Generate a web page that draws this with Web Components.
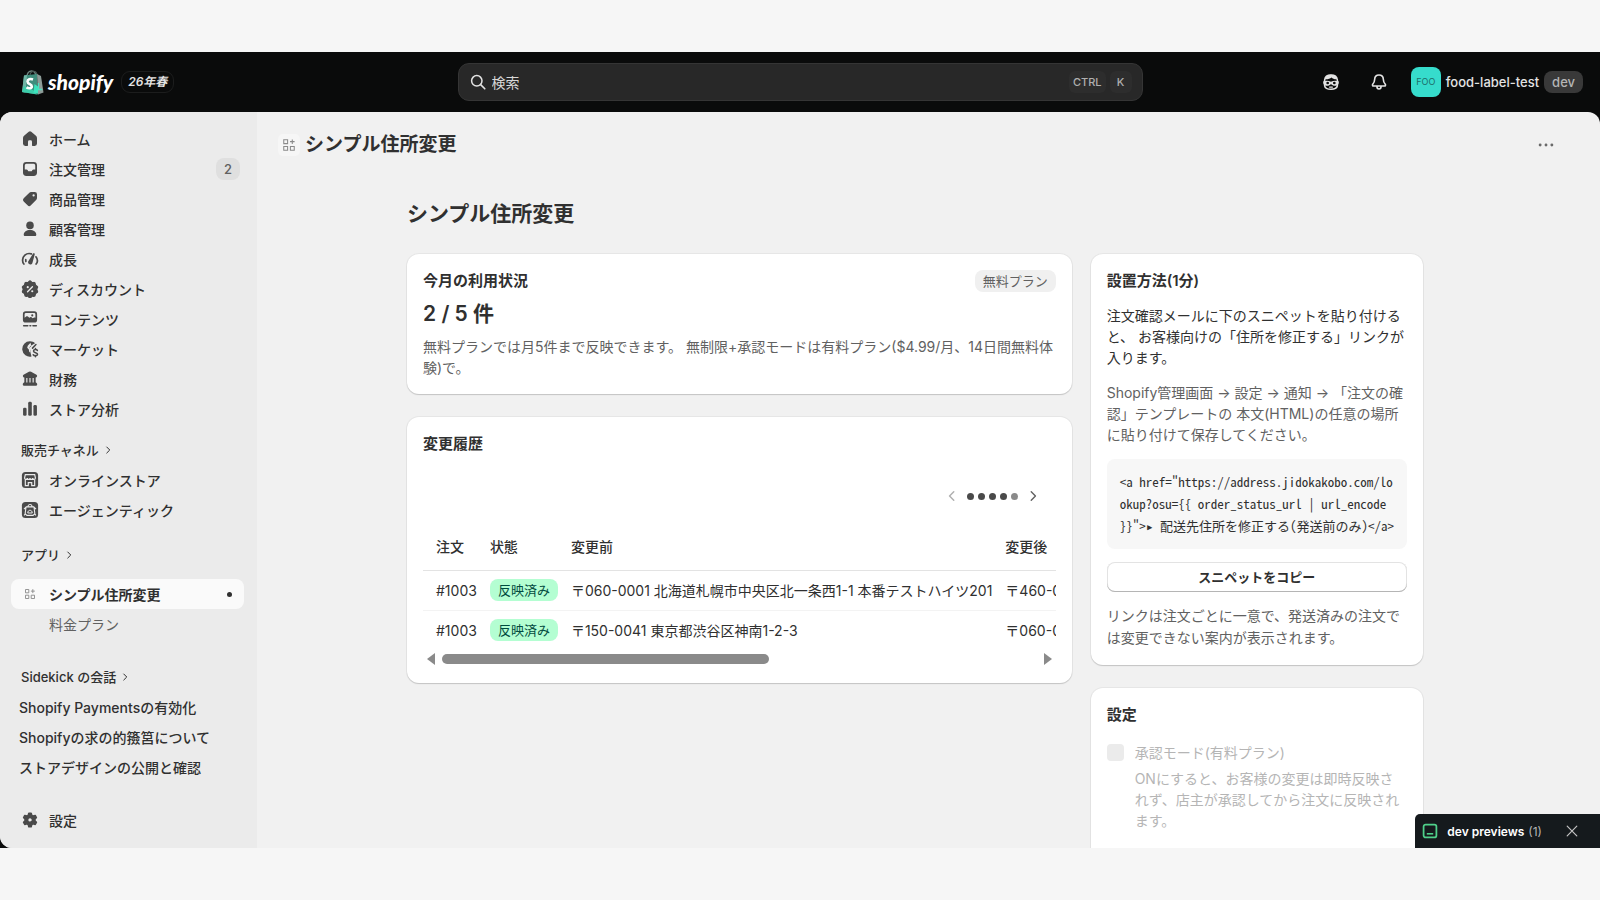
<!DOCTYPE html>
<html lang="ja">
<head>
<meta charset="utf-8">
<title>シンプル住所変更</title>
<style>
    html, body {
        height: 100%;
        margin: 0;
    }

    body {
        background: #f6f6f6;
        color: #303030;
        font-family: Inter, "Noto Sans CJK JP", sans-serif;
        font-size: 14px;
        line-height: 21px;
    }
</style>
</head>
<body>
<admin-shell>
    <top-bar slot="top"></top-bar>
    <side-nav slot="nav"></side-nav>
    <app-page slot="page" heading="シンプル住所変更">
        <usage-card slot="primary"></usage-card>
        <history-card slot="primary"></history-card>
        <install-card slot="secondary"></install-card>
        <settings-card slot="secondary"></settings-card>
    </app-page>
    <dev-preview slot="overlay"></dev-preview>
</admin-shell>

<script>
const ICONS = {
    home: '<path fill="currentColor" d="M8.600 2a2.100 2.100 0 0 1 2.800 0l5.200 4.500c.8.700 1.200 1.600 1.200 2.600V15a2.700 2.700 0 0 1-2.700 2.700H13a.8.8 0 0 1-.8-.8V13a1.500 1.500 0 0 0-1.500-1.500H9.300A1.500 1.500 0 0 0 7.800 13v3.900a.8.8 0 0 1-.8.8H4.900A2.700 2.700 0 0 1 2.200 15V9.100c0-1 .4-1.900 1.200-2.600z"/>',
    orders: '<path fill="currentColor" fill-rule="evenodd" d="M6 2.200h8A3.800 3.800 0 0 1 17.800 6v8a3.800 3.800 0 0 1-3.800 3.800H6A3.800 3.800 0 0 1 2.200 14V6A3.800 3.800 0 0 1 6 2.200zM6 4.200A1.800 1.800 0 0 0 4.200 6v4.500h1.900c.6 0 1.100.3 1.400.8l.4.800c.2.300.5.500.8.500h2.600c.3 0 .6-.2.800-.5l.4-.8c.3-.5.800-.8 1.400-.8h1.900V6A1.800 1.800 0 0 0 14 4.200z"/>',
    products: '<path fill="currentColor" fill-rule="evenodd" d="M11.300 2.200h3.900a2.600 2.600 0 0 1 2.600 2.600v3.900c0 .9-.3 1.700-1 2.300L11 17a2.600 2.600 0 0 1-3.700 0L3 12.800a2.600 2.600 0 0 1 0-3.700L9 3.200c.6-.6 1.400-1 2.300-1zM14 7.300a1.200 1.200 0 1 0 0-2.500 1.200 1.200 0 0 0 0 2.500z"/>',
    customers: '<circle cx="10" cy="6" r="4.200" fill="currentColor"/><path fill="currentColor" d="M3 16.400c0-3.100 3.200-5.200 7-5.200s7 2.100 7 5.200c0 .8-.6 1.400-1.400 1.400H4.400c-.8 0-1.400-.6-1.400-1.400z"/>',
    growth: '<path fill="none" stroke="currentColor" stroke-width="1.900" stroke-linecap="round" d="M3.200 15.600C1.200 13.400 1.100 8.700 4.300 5.800c2.200-2 5-2.200 7.200-1.500M16.600 7.600c2 2.600 1.900 5.900.2 8M5.300 10.800l.1 2"/><path fill="currentColor" d="M14.600 3.600c.5.2.8.7.7 1.200l-2.700 9.800a2.500 2.500 0 0 1-4.700-1.600c.1-.5.4-.8.6-1.100l4.900-8c.2-.3.7-.5 1.200-.3z"/>',
    discount: '<path fill="currentColor" d="M8.200 1.300a2.400 2.400 0 0 1 3.600 0l.8.9 1.300-.1a2.400 2.400 0 0 1 2.600 2.100l.2 1.200 1.100.6a2.400 2.400 0 0 1 .9 3.300l-.5 1.100.5 1.200a2.400 2.400 0 0 1-.9 3.200l-1.100.7-.2 1.200a2.400 2.400 0 0 1-2.600 2.100l-1.300-.1-.8.800a2.400 2.400 0 0 1-3.600 0l-.8-.8-1.300.1a2.400 2.400 0 0 1-2.600-2.100l-.2-1.200-1.100-.7a2.400 2.400 0 0 1-.9-3.200l.5-1.200-.5-1.100a2.400 2.400 0 0 1 .9-3.300l1.100-.6.2-1.200a2.400 2.400 0 0 1 2.600-2.100l1.300.1z"/><path stroke="#ebebeb" stroke-width="1.500" stroke-linecap="round" d="M7.300 13l5.400-5.600"/><circle cx="7.500" cy="8" r="1.200" fill="#ebebeb"/><circle cx="12.500" cy="12.500" r="1.200" fill="#ebebeb"/>',
    content: '<path fill="currentColor" fill-rule="evenodd" d="M5.300 1.500h9.400a3.200 3.200 0 0 1 3.200 3.200v6a3.200 3.200 0 0 1-3.200 3.200H5.300a3.200 3.200 0 0 1-3.200-3.200v-6a3.200 3.200 0 0 1 3.200-3.200zm.2 1.900A1.500 1.500 0 0 0 4 4.900v3.600l1.700-1.300c.6-.5 1.300-.5 1.900 0l1.700 1.500.7-.5c.6-.4 1.300-.4 1.900.1l1 1 1.300-.8c.6-.3 1.300-.3 1.800.1V4.900a1.500 1.500 0 0 0-1.500-1.500z"/><circle cx="12.500" cy="6" r="1.200" fill="currentColor"/><path stroke="currentColor" stroke-width="1.800" stroke-linecap="round" d="M3 17.500h4.500M10 17.500h.8M13.300 17.500H17"/>',
    markets: '<path fill="currentColor" d="M10 1.500c2.200 0 4.200.8 5.600 2.100l-3.800 2.100c-.7.4-.6 1-.9 1.600-.5.900-2 .8-2 1.900 0 1 1.200 1.100 1.500 2 .2.700-.2 1.200 0 2l1.300 5.100A8.500 8.500 0 1 1 10 1.500z"/><path fill="#ebebeb" d="M10.500 3l-3 3.300-.6 2.200 1.800 2 .3 2.300 1 1 .6-3-1.800-1.900 2.500-3z"/><path fill="none" stroke="currentColor" stroke-width="1.700" stroke-linecap="round" stroke-linejoin="round" d="M12.800 9l3.800-4M18.200 11.600c-.7-1.600-4.300-1.300-4.300.7 0 2.300 4.500 1.200 4.500 3.500 0 2-3.800 2.300-4.800.6M16.100 9.400v1.200M16.100 17.300v1.300"/>',
    finance: '<path fill="currentColor" d="M8.800 1.900a2.400 2.400 0 0 1 2.400 0l6 3.300c1.300.8.800 3-.9 3V13.700l1.100.8c.9.700 1 3.100-.9 3.100h-13c-1.900 0-1.800-2.400-.9-3.100l1.100-.8V8.200c-1.700 0-2.200-2.200-.9-3z"/><path stroke="#ebebeb" stroke-width="1.300" d="M6.500 8.800v5.200M10 8.800v5.200M13.500 8.800v5.200"/>',
    analytics: '<rect x="2.300" y="8.500" width="3.900" height="9" rx="1.500" fill="currentColor"/><rect x="8" y="2" width="4" height="15.500" rx="1.500" fill="currentColor"/><rect x="13.800" y="5.500" width="3.900" height="12" rx="1.500" fill="currentColor"/>',
    store: '<rect x="1" y="1" width="18" height="18" rx="4" fill="currentColor"/><path fill="none" stroke="#ebebeb" stroke-width="1.300" d="M4.800 4h10.400l.8 3.700c0 2.200-2.900 2.200-3 0-.1 2.200-2.900 2.200-3 0-.1 2.200-2.900 2.200-3 0-.1 2.200-3 2.200-3 0zM4.800 10v6.200h3.300v-3.200h3.800v3.200h3.300V10"/>',
    agentic: '<rect x="1" y="1" width="18" height="18" rx="4" fill="currentColor"/><path fill="none" stroke="#ebebeb" stroke-width="1.200" stroke-linejoin="round" d="M5.600 6.500h8.800l1 7.500-1.900 2H6.500l-1.900-2zM7.800 6.200c0-3 4.400-3 4.400 0M3.300 9l2.200-2.200M16.700 9l-2.200-2.200M5.200 13.800L3.500 16M14.800 13.800l1.700 2.200"/><path fill="none" stroke="#ebebeb" stroke-width="1.100" d="M7.500 13.300c0-4 5-4 5 0z"/>',
    settings: '<path fill="currentColor" fill-rule="evenodd" d="M8.700 1.900h2.600l.7 2.300 1.400.8 2.400-.6 1.300 2.300-1.600 1.800v1.700l1.600 1.800-1.300 2.300-2.400-.6-1.400.8-.7 2.400H8.700L8 14.500l-1.400-.8-2.400.6-1.300-2.300 1.600-1.800V8.500L2.900 6.700l1.300-2.300 2.400.6L8 4.200zM10 12a2.700 2.700 0 1 0 0-5.400 2.700 2.700 0 0 0 0 5.400z" stroke="currentColor" stroke-width="1.700" stroke-linejoin="round" transform="translate(0 .6)"/>',
    app: '<g fill="none" stroke="#8a8a8a" stroke-width="1.500"><path d="M2.500 2.500h5.500v5.500h-5.500zM2.500 12h5.500v5.500h-5.500zM12 12h5.500v5.500h-5.500z"/><path d="M14.700 2v6.500M11.500 5.200H18"/></g>',
    chevron: '<path fill="none" stroke="currentColor" stroke-width="2" stroke-linecap="round" stroke-linejoin="round" d="M7.500 4l6 6-6 6"/>',
    chevronLeft: '<path fill="none" stroke="currentColor" stroke-width="2" stroke-linecap="round" stroke-linejoin="round" d="M12.500 4l-6 6 6 6"/>',
    search: '<circle cx="8.500" cy="8.500" r="6.500" fill="none" stroke="currentColor" stroke-width="1.900"/><path stroke="currentColor" stroke-width="2" stroke-linecap="round" d="M13.300 13.300l5.200 5.200"/>',
    sidekick: '<path fill="none" stroke="currentColor" stroke-width="1.700" d="M3 7.500c.4-3.300 3.500-5.200 7-5.200s6.600 1.900 7 5.200c.5 3 .5 5 0 7-.5 2.200-3.500 3.500-7 3.500s-6.500-1.300-7-3.500c-.5-2-.5-4 0-7z"/><path fill="currentColor" d="M3 7C4 3 7 2 10 2c3.500 0 6 1.500 7 5-3 .300-5-.5-6.500-2C9 6.500 6 7.300 3 7z"/><path fill="currentColor" fill-rule="evenodd" d="M1.500 9.300C4.500 8 7.500 8.500 10 9.600c2.500-1.100 5.500-1.600 8.500-.3.600 2.700-1 5-4 5-2 0-3.500-1-4.500-2-1 1-2.500 2-4.500 2-3 0-4.600-2.300-4-5zM6.300 12.600a1.500 1.500 0 1 0 0-3 1.500 1.500 0 0 0 0 3zM13.700 12.600a1.500 1.500 0 1 0 0-3 1.500 1.500 0 0 0 0 3z"/><path stroke="currentColor" stroke-width="1.300" stroke-linecap="round" d="M8.500 15.700h3"/>',
    bell: '<path fill="none" stroke="currentColor" stroke-width="1.800" stroke-linejoin="round" d="M10 2.200c-2.900 0-4.700 2-4.800 4.800-.1 3-.700 3.900-2 5.200-.9 1-.4 2.300.8 2.300h12c1.200 0 1.700-1.300.8-2.300-1.300-1.300-1.900-2.200-2-5.200-.1-2.800-1.900-4.800-4.800-4.800zM7.700 15c0 3.700 4.600 3.700 4.600 0"/>',
    more: '<g fill="currentColor"><circle cx="3.500" cy="10" r="1.600"/><circle cx="10" cy="10" r="1.600"/><circle cx="16.500" cy="10" r="1.600"/></g>',
    preview: '<rect x="2" y="2" width="16" height="16" rx="2.500" fill="none" stroke="#4fd08a" stroke-width="2.200"/><path stroke="#4fd08a" stroke-width="2" d="M6 13.500h8"/>',
    close: '<path stroke="currentColor" stroke-width="2" stroke-linecap="round" d="M2 2l16 16M18 2L2 18"/>'
};

const BASE = `
    *, *::before { box-sizing: border-box; }
    button { font: inherit; color: inherit; border: 0; padding: 0; background: none; cursor: pointer; }
    a { color: inherit; text-decoration: none; }
    h1, h2, p { margin: 0; }
`;

class BaseElement extends HTMLElement {
    connectedCallback() {
        if (this.shadowRoot) return;
        const template = document.createElement("template");
        template.innerHTML = `<style>${BASE}</style>${this.render()}`;
        this.attachShadow({ mode: "open" }).append(template.content.cloneNode(true));
    }
}

class UiIcon extends BaseElement {
    render() {
        return `
            <style>
                :host { display: block; flex: none; width: 18px; height: 18px; }
                svg { display: block; width: 100%; height: 100%; }
            </style>
            <svg viewBox="0 0 20 20" fill="none" aria-hidden="true">${ICONS[this.getAttribute("name")]}</svg>
        `;
    }
}

class UiBadge extends BaseElement {
    render() {
        return `
            <style>
                :host {
                    display: inline-block;
                    flex: none;
                    padding: 0 8px;
                    border-radius: 8px;
                    background: #f0f0f0;
                    color: #616161;
                    font-size: 13px;
                    line-height: 22px;
                    white-space: nowrap;
                }
                :host([tone="success"]) { background: #b4fed2; color: #014b40; }
                :host([tone="count"]) { background: #dfdfdf; }
                :host([tone="dark"]) { background: #393939; color: #b5b5b5; }
            </style>
            <slot></slot>
        `;
    }
}

class UiCard extends BaseElement {
    render() {
        return `
            <style>
                :host {
                    display: flex;
                    flex-direction: column;
                    padding: 16px;
                    border-radius: 12px;
                    background: #fff;
                    box-shadow: 0 1px 1px #c4c4c4, 0 0 0 1px #e6e6e6;
                }
                header { display: flex; justify-content: space-between; align-items: center; }
                h2 { font-size: 15px; line-height: 22px; font-weight: 600; }
            </style>
            <header><h2>${this.getAttribute("heading")}</h2><slot name="aside"></slot></header>
            <slot></slot>
        `;
    }
}

class AdminShell extends BaseElement {
    render() {
        return `
            <style>
                :host { display: flex; height: 100vh; padding: 52px 0; box-sizing: border-box; }
                .frame {
                    position: relative;
                    display: flex;
                    flex-direction: column;
                    flex: 1;
                    min-width: 0;
                    overflow: hidden;
                    background: #0a0b0b;
                }
                .panel {
                    display: flex;
                    flex: 1;
                    min-height: 0;
                    overflow: hidden;
                    border-radius: 12px;
                    background: #f1f1f1;
                }
                ::slotted([slot="page"]) { flex: 1; min-width: 0; }
            </style>
            <div class="frame">
                <slot name="top"></slot>
                <div class="panel">
                    <slot name="nav"></slot>
                    <slot name="page"></slot>
                </div>
                <slot name="overlay"></slot>
            </div>
        `;
    }
}

class TopBar extends BaseElement {
    render() {
        return `
            <style>
                :host {
                    display: grid;
                    grid-template-columns: 1fr minmax(0, 685px) 1fr;
                    align-items: center;
                    flex: none;
                    height: 60px;
                    padding: 0 17px;
                    color: #e3e3e3;
                }
                .brand, .tools, .account { display: flex; align-items: center; }
                .brand { padding-left: 4px; }
                .logo { display: flex; align-items: center; gap: 4px; color: #fff; font: italic 900 21px/26px Lato, sans-serif; }
                .edition {
                    margin-left: 8px;
                    padding: 0 6px;
                    border: 1px solid #1c1d1d;
                    border-radius: 9px;
                    font-size: 12px;
                    line-height: 20px;
                    font-weight: 600;
                    font-style: italic;
                }
                .search {
                    display: flex;
                    align-items: center;
                    gap: 4px;
                    height: 38px;
                    padding: 0 10px 0 11px;
                    border: 1px solid #353535;
                    border-radius: 11px;
                    background: #282828;
                }
                .search ui-icon { width: 16px; height: 16px; margin-right: 2px; }
                input {
                    flex: 1;
                    min-width: 0;
                    padding: 0;
                    border: 0;
                    outline: 0;
                    background: none;
                    color: inherit;
                    font: inherit;
                }
                input::placeholder { color: #d8d8d8; opacity: 1; }
                kbd {
                    min-width: 22px;
                    padding: 0 4px;
                    border-radius: 6px;
                    background: #2d2d2d;
                    color: #b0b0b0;
                    font: 500 11px/22px Inter, sans-serif;
                    text-align: center;
                }
                .tools { justify-content: flex-end; gap: 16px; }
                .tools > button { padding: 7px; }
                .tools > .account { gap: 5px; padding: 0; font-size: 13px; font-weight: 500; }
                .avatar {
                    width: 30px;
                    border-radius: 8px;
                    background: #36dccc;
                    color: #1d6e68;
                    font-size: 9px;
                    line-height: 30px;
                    font-weight: 400;
                    text-align: center;
                }
            </style>
            <div class="brand">
                <a class="logo" href="#">
                    <svg width="23" height="27" viewBox="0 0 23 27" fill="none" aria-hidden="true">
                        <path d="M6 8c0-8 9-8 9 0" stroke="#6f8580" stroke-width="1.600"/>
                        <path d="M9 7c0-6 7-6 7-1" stroke="#4b5a56" stroke-width="1.200"/>
                        <path d="M3 6.500l13-1.500 1 20.500L1 23z" fill="#3f8d7c"/>
                        <path d="M16 5l4 2 2.500 16.500L17 25.500z" fill="#8d9c98"/>
                        <path d="M3 6.500l3-.4L4.500 23.600 1 23z" fill="#6fb5a5"/>
                        <path d="M3 17l9 4 4 4.400L1 23z" fill="#3ccdaa"/>
                        <path d="M13.500 15l3.500 2.500v7l-4.500-1z" fill="#3ce4bd"/>
                        <path d="M12 10.500c-2.700-1-5.500-.2-5.500 2 0 2.800 4.300 2.600 4.300 5 0 2-3 2.300-5.300.8" stroke="#fff" stroke-width="2.600"/>
                        <path d="M17.500 14v6.500h3.500" stroke="#50dfbf" stroke-width="1.300"/>
                    </svg>
                    shopify
                </a>
                <span class="edition">26年春</span>
            </div>
            <label class="search">
                <ui-icon name="search"></ui-icon>
                <input type="text" placeholder="検索" aria-label="検索">
                <kbd>CTRL</kbd><kbd>K</kbd>
            </label>
            <div class="tools">
                <button aria-label="Sidekick"><ui-icon name="sidekick"></ui-icon></button>
                <button aria-label="通知"><ui-icon name="bell"></ui-icon></button>
                <button class="account">
                    <span class="avatar">FOO</span>
                    <span>food-label-test</span>
                    <ui-badge tone="dark">dev</ui-badge>
                </button>
            </div>
        `;
    }
}

class NavItem extends BaseElement {
    render() {
        const icon = this.getAttribute("icon");
        return `
            <style>
                :host { display: block; }
                a {
                    display: flex;
                    align-items: center;
                    gap: 10px;
                    height: 30px;
                    padding: 0 4px 0 10px;
                    border-radius: 8px;
                    color: #303030;
                    font-weight: 500;
                    white-space: nowrap;
                }
                ui-icon { color: #4a4a4a; }
                ui-icon[name="app"] { padding: 3px; box-sizing: border-box; }
                .label { flex: 1; }
                :host([current]) a { background: #fafafa; font-weight: 600; }
                :host([sub]) a { padding-left: 38px; color: #616161; font-weight: 400; }
                :host([plain]) a { padding-left: 8px; }
                .dot { width: 5px; height: 5px; margin-right: 8px; border-radius: 50%; background: #303030; }
            </style>
            <a href="#"${this.hasAttribute("current") ? ' aria-current="page"' : ""}>
                ${icon ? `<ui-icon name="${icon}"></ui-icon>` : ""}
                <span class="label"><slot></slot></span>
                <slot name="end"></slot>
                ${this.hasAttribute("current") ? '<span class="dot"></span>' : ""}
            </a>
        `;
    }
}

class NavSection extends BaseElement {
    render() {
        return `
            <style>
                :host { display: block; }
                button {
                    display: flex;
                    align-items: center;
                    gap: 4px;
                    height: 30px;
                    padding-left: 10px;
                    font-size: 13px;
                    font-weight: 500;
                }
                ui-icon { width: 10px; height: 10px; }
            </style>
            <button>${this.getAttribute("heading")}<ui-icon name="chevron"></ui-icon></button>
            <slot></slot>
        `;
    }
}

class SideNav extends BaseElement {
    render() {
        return `
            <style>
                :host { flex: none; width: 257px; background: #ebebeb; box-sizing: border-box; padding: 12px 13px 13px 11px; }
                nav { display: flex; flex-direction: column; height: 100%; }
                nav-section { margin-top: 11px; }
                nav-section.apps { margin-top: 15px; }
                nav-section.apps nav-item[current] { margin-top: 9px; }
                nav-section.chats { margin-top: 23px; }
                .bottom { margin-top: auto; }
            </style>
            <nav>
                <nav-item icon="home">ホーム</nav-item>
                <nav-item icon="orders">注文管理<ui-badge slot="end" tone="count">2</ui-badge></nav-item>
                <nav-item icon="products">商品管理</nav-item>
                <nav-item icon="customers">顧客管理</nav-item>
                <nav-item icon="growth">成長</nav-item>
                <nav-item icon="discount">ディスカウント</nav-item>
                <nav-item icon="content">コンテンツ</nav-item>
                <nav-item icon="markets">マーケット</nav-item>
                <nav-item icon="finance">財務</nav-item>
                <nav-item icon="analytics">ストア分析</nav-item>
                <nav-section heading="販売チャネル">
                    <nav-item icon="store">オンラインストア</nav-item>
                    <nav-item icon="agentic">エージェンティック</nav-item>
                </nav-section>
                <nav-section class="apps" heading="アプリ">
                    <nav-item icon="app" current>シンプル住所変更</nav-item>
                    <nav-item sub>料金プラン</nav-item>
                </nav-section>
                <nav-section class="chats" heading="Sidekick の会話">
                    <nav-item plain>Shopify Paymentsの有効化</nav-item>
                    <nav-item plain>Shopifyの求の的籡筥について</nav-item>
                    <nav-item plain>ストアデザインの公開と確認</nav-item>
                </nav-section>
                <nav-item class="bottom" icon="settings">設定</nav-item>
            </nav>
        `;
    }
}

class AppPage extends BaseElement {
    render() {
        const heading = this.getAttribute("heading");
        return `
            <style>
                :host { display: flex; flex-direction: column; overflow: hidden; }
                .title { display: flex; align-items: center; gap: 5px; flex: none; height: 65px; padding: 0 45px 0 21px; }
                .title h2 { flex: 1; font-size: 19px; line-height: 28px; font-weight: 600; }
                .mark { padding: 4px; border-radius: 5px; background: #f6f6f6; }
                .mark ui-icon { width: 14px; height: 14px; }
                .title button { color: #6a6a6a; }
                .body { flex: 1; min-height: 0; padding-right: 27px; }
                .content { max-width: 1016px; margin: 0 auto; }
                h1 { padding: 21px 0 24px; font-size: 21px; line-height: 32px; font-weight: 600; }
                .columns { display: grid; grid-template-columns: minmax(0, 2fr) minmax(0, 1fr); gap: 19px; align-items: start; }
                .column { display: flex; flex-direction: column; gap: 23px; }
            </style>
            <div class="title">
                <span class="mark"><ui-icon name="app"></ui-icon></span>
                <h2>${heading}</h2>
                <button aria-label="その他"><ui-icon name="more"></ui-icon></button>
            </div>
            <div class="body">
                <div class="content">
                    <h1>${heading}</h1>
                    <div class="columns">
                        <div class="column"><slot name="primary"></slot></div>
                        <div class="column"><slot name="secondary"></slot></div>
                    </div>
                </div>
            </div>
        `;
    }
}

class UsageCard extends BaseElement {
    render() {
        return `
            <style>
                :host { display: block; }
                .count { margin: 7px 0; font-size: 21px; line-height: 30px; font-weight: 600; }
                .note { color: #616161; }
            </style>
            <ui-card heading="今月の利用状況">
                <ui-badge slot="aside">無料プラン</ui-badge>
                <p class="count">2 / 5 件</p>
                <p class="note">無料プランでは月5件まで反映できます。 無制限+承認モードは有料プラン($4.99/月、14日間無料体験)で。</p>
            </ui-card>
        `;
    }
}

class HistoryCard extends BaseElement {
    render() {
        const rows = [
            ["#1003", "〒060-0001 北海道札幌市中央区北一条西1-1 本番テストハイツ201", "〒460-0008"],
            ["#1003", "〒150-0041 東京都渋谷区神南1-2-3", "〒060-0001"]
        ];
        return `
            <style>
                :host { display: block; }
                .pager { display: flex; align-items: center; justify-content: flex-end; gap: 8px; height: 32px; margin-top: 25px; padding-right: 16px; }
                .pager ui-icon { width: 14px; height: 14px; color: #616161; }
                .pager button:disabled { opacity: .5; }
                .dots { display: flex; gap: 4px; }
                .dots i { width: 7px; height: 7px; border-radius: 50%; background: #4a4a4a; }
                .dots i:last-child { background: #8a8a8a; }
                .scroller { overflow-x: auto; scrollbar-width: none; margin-top: 11px; }
                table { border-collapse: collapse; white-space: nowrap; }
                th, td { padding: 0 0 0 13px; text-align: left; font-weight: 400; }
                th { height: 47px; font-weight: 500; }
                td { height: 40px; border-top: 1px solid #f3f3f3; }
                tbody tr:first-child td { border-color: #e3e3e3; }
                ui-badge { display: block; }
                .bar { display: flex; align-items: center; gap: 7px; height: 17px; padding: 0 4px; }
                .bar .left, .bar .right { border: solid transparent; border-width: 6px 0; }
                .bar .left { border-right: 8px solid #8a8a8a; }
                .bar .right { border-left: 8px solid #8a8a8a; }
                .track { flex: 1; }
                .thumb { width: 55%; height: 10px; border-radius: 5px; background: #8a8a8a; }
            </style>
            <ui-card heading="変更履歴">
                <div class="pager">
                    <button aria-label="前の列" disabled><ui-icon name="chevronLeft"></ui-icon></button>
                    <span class="dots"><i></i><i></i><i></i><i></i><i></i></span>
                    <button aria-label="次の列"><ui-icon name="chevron"></ui-icon></button>
                </div>
                <div class="scroller">
                    <table>
                        <thead><tr><th>注文</th><th>状態</th><th>変更前</th><th>変更後</th></tr></thead>
                        <tbody>
                            ${rows.map(([id, before, after]) => `
                                <tr><td>${id}</td><td><ui-badge tone="success">反映済み</ui-badge></td><td>${before}</td><td>${after}</td></tr>
                            `).join("")}
                        </tbody>
                    </table>
                </div>
                <div class="bar"><span class="left"></span><span class="track"><div class="thumb"></div></span><span class="right"></span></div>
            </ui-card>
        `;
    }
}

class InstallCard extends BaseElement {
    render() {
        return `
            <style>
                :host { display: block; }
                p { margin-top: 13px; }
                .muted { margin-top: 14px; color: #616161; }
                .foot { margin-top: 13px; color: #616161; line-height: 22px; }
                pre {
                    margin: 14px 0 13px;
                    padding: 12px 13px;
                    border-radius: 8px;
                    background: #f7f7f7;
                    font: 13px/22px "Noto Sans Mono CJK JP", "Liberation Mono", monospace;
                    white-space: pre-wrap;
                    word-break: break-all;
                }
                .copy {
                    height: 30px;
                    border-radius: 8px;
                    box-shadow: inset 0 -1px 0 #b5b5b5, inset 0 0 0 1px #e3e3e3;
                    font-size: 13px;
                    font-weight: 600;
                }
            </style>
            <ui-card heading="設置方法(1分)">
                <p>注文確認メールに下のスニペットを貼り付けると、 お客様向けの「住所を修正する」リンクが入ります。</p>
                <p class="muted">Shopify管理画面 → 設定 → 通知 → 「注文の確認」テンプレートの 本文(HTML)の任意の場所に貼り付けて保存してください。</p>
                <pre>&lt;a href="https://address.jidokakobo.com/lookup?osu={{ order_status_url | url_encode }}"&gt;▸ 配送先住所を修正する(発送前のみ)&lt;/a&gt;</pre>
                <button class="copy">スニペットをコピー</button>
                <p class="foot">リンクは注文ごとに一意で、発送済みの注文では変更できない案内が表示されます。</p>
            </ui-card>
        `;
    }
}

class SettingsCard extends BaseElement {
    render() {
        return `
            <style>
                :host { display: block; }
                .choice { display: grid; grid-template-columns: 17px 1fr; gap: 5px 11px; margin: 16px 0; color: #b5b5b5; }
                input { appearance: none; width: 17px; height: 17px; margin: 2px 0; border-radius: 4px; background: #ebebeb; }
                p { grid-column: 2; padding-right: 4px; }
            </style>
            <ui-card heading="設定">
                <div class="choice">
                    <input type="checkbox" id="approval" aria-describedby="approval-help" disabled>
                    <label for="approval">承認モード(有料プラン)</label>
                    <p id="approval-help">ONにすると、お客様の変更は即時反映されず、店主が承認してから注文に反映されます。</p>
                </div>
            </ui-card>
        `;
    }
}

class DevPreview extends BaseElement {
    render() {
        return `
            <style>
                :host {
                    position: absolute;
                    right: 0;
                    bottom: 0;
                    display: flex;
                    align-items: center;
                    height: 34px;
                    padding: 0 22px 0 7px;
                    border-radius: 5px 0 0 0;
                    background: #151a1d;
                    color: #fff;
                    font-size: 12px;
                }
                ui-icon { width: 16px; height: 16px; }
                button ui-icon { width: 12px; height: 12px; }
                .name { margin: 0 4px 0 9px; font-weight: 600; }
                .count { color: #b5b5b5; }
                button { margin-left: 24px; color: #c4c4c4; }
            </style>
            <ui-icon name="preview"></ui-icon>
            <span class="name">dev previews</span>
            <span class="count">(1)</span>
            <button aria-label="閉じる"><ui-icon name="close"></ui-icon></button>
        `;
    }
}

customElements.define("ui-icon", UiIcon);
customElements.define("ui-badge", UiBadge);
customElements.define("ui-card", UiCard);
customElements.define("admin-shell", AdminShell);
customElements.define("top-bar", TopBar);
customElements.define("nav-item", NavItem);
customElements.define("nav-section", NavSection);
customElements.define("side-nav", SideNav);
customElements.define("app-page", AppPage);
customElements.define("usage-card", UsageCard);
customElements.define("history-card", HistoryCard);
customElements.define("install-card", InstallCard);
customElements.define("settings-card", SettingsCard);
customElements.define("dev-preview", DevPreview);
</script>
</body>
</html>
